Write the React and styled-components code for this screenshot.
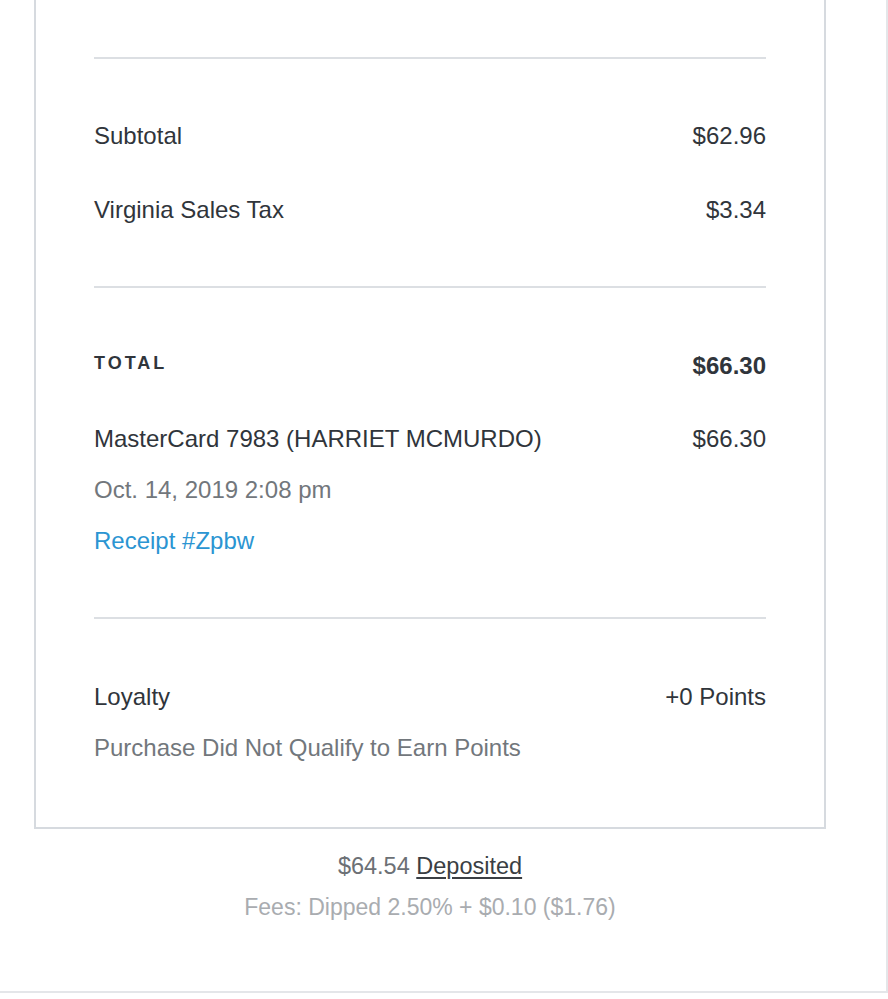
import React from "react"
import styled, { createGlobalStyle } from "styled-components"

const GlobalStyle = createGlobalStyle`
  html, body {
    margin: 0;
    padding: 0;
    background: #ffffff;
  }
  body {
    font-family: "Liberation Sans", Arial, sans-serif;
    color: #33383e;
    -webkit-font-smoothing: antialiased;
  }
`

const Page = styled.div`
  box-sizing: border-box;
  width: 888px;
  height: 993px;
  padding: 0 60px 0 34px;
  border-right: 2px solid #e4e6e9;
  border-bottom: 2px solid #e4e6e9;
  background: #fff;
`

const Card = styled.div`
  box-sizing: border-box;
  width: 792px;
  padding: 57px 58px 0;
  border: 2px solid #d6dadf;
  border-top: none;
`

const Section = styled.div`
  border-top: 2px solid #dcdfe3;
  padding: ${props => props.pad || "62px 0 61px"};
  display: flex;
  flex-direction: column;
  gap: ${props => props.gap || "44px"};
`

const Row = styled.div`
  display: flex;
  justify-content: space-between;
  align-items: flex-start;
  font-size: 24px;
  line-height: 30px;
`

const Stack = styled.div`
  display: flex;
  flex-direction: column;
  gap: 21px;
`

const Label = styled.span`
  color: #30353b;
`

const Amount = styled.span`
  color: #30353b;
  font-weight: ${props => (props.bold ? 700 : 400)};
`

const TotalLabel = styled.span`
  font-size: 18px;
  line-height: 24px;
  font-weight: 700;
  letter-spacing: 3px;
  text-transform: uppercase;
  color: #30353b;
`

const Muted = styled.span`
  color: #72777c;
`

const ReceiptLink = styled.a`
  color: #2b95d2;
  text-decoration: none;
`

const Footer = styled.div`
  padding-top: 22px;
  display: flex;
  flex-direction: column;
  align-items: center;
  gap: 11px;
  font-size: 23.5px;
  line-height: 30px;
`

const Deposit = styled.div`
  color: #6c7075;
`

const DepositLink = styled.a`
  color: #3a3e43;
  text-decoration: underline;
  text-underline-offset: 3px;
`

const Fees = styled.div`
  color: #a9acb0;
  font-size: 23px;
`

export default function App() {
  return (
    <>
      <GlobalStyle />
      <Page>
        <Card>
          <Section>
            <Row>
              <Label>Subtotal</Label>
              <Amount>$62.96</Amount>
            </Row>
            <Row>
              <Label>Virginia Sales Tax</Label>
              <Amount>$3.34</Amount>
            </Row>
          </Section>

          <Section pad="63px 0 61px" gap="43px">
            <Row>
              <TotalLabel>Total</TotalLabel>
              <Amount bold>$66.30</Amount>
            </Row>
            <Row>
              <Stack>
                <Label>MasterCard 7983 (HARRIET MCMURDO)</Label>
                <Muted>Oct. 14, 2019 2:08 pm</Muted>
                <ReceiptLink href="#">Receipt #Zpbw</ReceiptLink>
              </Stack>
              <Amount>$66.30</Amount>
            </Row>
          </Section>

          <Section pad="63px 0 64px">
            <Row>
              <Stack>
                <Label>Loyalty</Label>
                <Muted>Purchase Did Not Qualify to Earn Points</Muted>
              </Stack>
              <Amount>+0 Points</Amount>
            </Row>
          </Section>
        </Card>

        <Footer>
          <Deposit>
            $64.54 <DepositLink href="#">Deposited</DepositLink>
          </Deposit>
          <Fees>Fees: Dipped 2.50% + $0.10 ($1.76)</Fees>
        </Footer>
      </Page>
    </>
  )
}
